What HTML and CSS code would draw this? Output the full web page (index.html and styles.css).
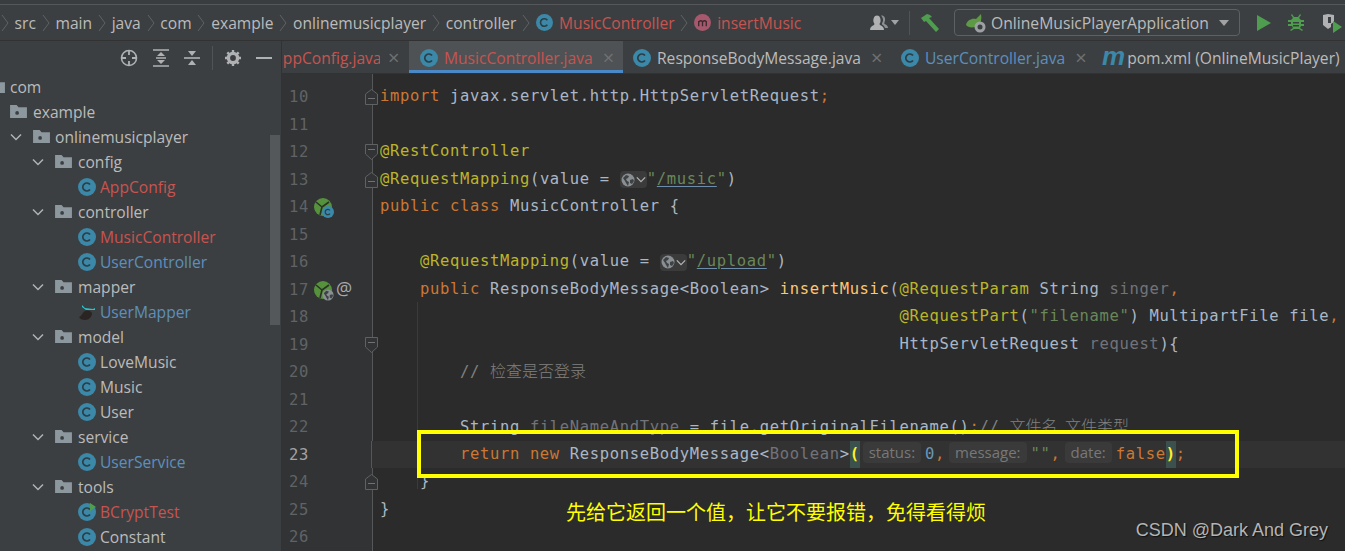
FILE: index.html
```html
<!DOCTYPE html>
<html lang="en">
<head>
<meta charset="utf-8">
<title>OnlineMusicPlayer</title>
<link rel="stylesheet" href="styles.css">
</head>
<body>
<svg class="defs" width="0" height="0" aria-hidden="true">
  <symbol id="cls" viewBox="0 0 18 18"><circle cx="9" cy="9" r="9" fill="#3b88a8"/><path d="M12 6.600A4 4 0 1 0 12 11.400" fill="none" stroke="#2c3e46" stroke-width="1.700"/></symbol>
  <symbol id="mth" viewBox="0 0 18 18"><circle cx="9" cy="9" r="9" fill="#a8586c"/><path d="M5 13V7.500M5 8.500Q7 6 9 8V13M9 8.500Q11 6 13 8V13" fill="none" stroke="#3a2a30" stroke-width="1.400"/></symbol>
  <symbol id="fld" viewBox="0 0 18 16"><path d="M0 1h7l2 2.500h9V15H0z" fill="#8c979e"/><circle cx="7.500" cy="9.500" r="2" fill="#3c3f41"/></symbol>
  <symbol id="chv" viewBox="0 0 12 8"><path d="M1 1.500l5 5 5-5" fill="none" stroke="#b0b3b5" stroke-width="1.500"/></symbol>
  <symbol id="sep" viewBox="0 0 8 18"><path d="M1 1l6 8-6 8" fill="none" stroke="#606364" stroke-width="1"/></symbol>
  <symbol id="bean" viewBox="0 0 18 18"><circle cx="9" cy="9" r="9" fill="#56923b"/><path d="M2 4l6 5M8 9l-2 8M8 9l7-5" fill="none" stroke="#2b3328" stroke-width="1.600"/></symbol>
  <symbol id="globe" viewBox="0 0 14 14"><circle cx="7" cy="7" r="6.500" fill="#8a8f93"/><path d="M2 5l3-3 3 1-1 2-2 1 1 2 2 1-1 4-2-3-1-2zM9 7l3-1 1 2-2 3-2-1z" fill="#3f4244"/></symbol>
  <symbol id="foldup" viewBox="0 0 13 16"><path d="M6.500.5L12.500 5V15.500H.5V5z" fill="#313335" stroke="#5f6163"/><path d="M3 9.500h7" stroke="#6f7173"/></symbol>
  <symbol id="folddown" viewBox="0 0 13 16"><path d="M.5.5H12.500V10L6.500 15.500.5 10z" fill="#313335" stroke="#5f6163"/><path d="M3 5.500h7" stroke="#6f7173"/></symbol>
</svg>

<div class="app">
  <header class="top">
    <nav class="crumbs">
      <svg class="sp"><use href="#sep"/></svg><span>src</span>
      <svg class="sp"><use href="#sep"/></svg><span>main</span>
      <svg class="sp"><use href="#sep"/></svg><span>java</span>
      <svg class="sp"><use href="#sep"/></svg><span>com</span>
      <svg class="sp"><use href="#sep"/></svg><span>example</span>
      <svg class="sp"><use href="#sep"/></svg><span>onlinemusicplayer</span>
      <svg class="sp"><use href="#sep"/></svg><span>controller</span>
      <svg class="sp"><use href="#sep"/></svg><svg class="ic16"><use href="#cls"/></svg><span class="red">MusicController</span>
      <svg class="sp"><use href="#sep"/></svg><svg class="ic16"><use href="#mth"/></svg><span class="red">insertMusic</span>
    </nav>
    <div class="actions">
      <svg class="person" width="20" height="18" viewBox="0 0 20 18"><path d="M1 16c0-3 2-4 4-5 1-1 0-2-.500-3C4 5 5 1.500 8 1.500S12 5 11.500 8c-.500 1-1.500 2-.500 3 2 1 4 2 4 5z" fill="#afb1b3"/><path d="M12 1.500c3-.5 4.500 2 4 5-.3 1.500-1 2.500-.5 3.500 1.500.8 3.500 1.500 3.500 4h-3c-.5-2-2-3-3-3.500-.5-1 .5-2 1-3.500.3-2-.5-4-2-5.500z" fill="#8d8f91"/></svg>
      <span class="caret small"></span>
      <i class="vsep"></i>
      <svg class="hammer" width="21" height="20" viewBox="0 0 21 20"><path d="M1 5l6-4 3 1 2 2-3 1 10 11-3 3L6 8 4 9z" fill="#4f9e4f"/></svg>
      <div class="combo">
        <svg width="20" height="20" viewBox="0 0 20 20"><path d="M0 12C1 7 6 5 10 6l5-5c1 5 0 9-3 12-4 2-10 2-12-1z" fill="#5e9a45"/><circle cx="14" cy="14" r="5.500" fill="#9ea1a3"/><circle cx="14" cy="14" r="2.500" fill="#3c3f41"/></svg>
        <span>OnlineMusicPlayerApplication</span>
        <span class="caret"></span>
      </div>
      <svg class="run" width="14" height="16" viewBox="0 0 14 16"><path d="M0 0l14 8-14 8z" fill="#4f9e4f"/></svg>
      <svg class="debug" width="18" height="18" viewBox="0 0 18 18"><path d="M5 0l2 3h4l2-3 1 1-2 3 2 2h3v2h-3v2h3v2h-3l-1 2 3 2-1 1-3-2H7l-3 2-1-1 3-2-1-2H1v-2h3V8H1V6h3l2-2-2-3z" fill="#4f9e4f"/><path d="M6 8h6v1.500H6zM6 11h6v1.500H6z" fill="#3c3f41"/></svg>
      <svg class="cover" width="20" height="20" viewBox="0 0 20 20"><path d="M1 2l5-1 6 1v7l-3 2v3l-3 2-5-4z" fill="#afb1b3"/><path d="M6 4h3v6H6z" fill="#3c3f41"/><path d="M11 8l9 6-9 6z" fill="#4f9e4f"/></svg>
    </div>
  </header>

  <main class="body">
    <aside class="side">
      <div class="tools">
        <svg width="18" height="18" viewBox="0 0 18 18"><circle cx="9" cy="9" r="7.500" fill="none" stroke="#afb1b3" stroke-width="1.600"/><path d="M9 1v5M9 12v5M1 9h5M12 9h5" stroke="#afb1b3" stroke-width="1.800"/></svg>
        <svg width="16" height="18" viewBox="0 0 16 18"><path d="M0 1h16M0 17h16M3 9h10" stroke="#afb1b3" stroke-width="1.600"/><path d="M8 3l4 4H4zM8 15l-4-4h8z" fill="#afb1b3"/></svg>
        <svg width="16" height="18" viewBox="0 0 16 18"><path d="M0 9h16" stroke="#afb1b3" stroke-width="1.600"/><path d="M8 7L4 2h8zM8 11l4 5H4z" fill="#afb1b3"/></svg>
        <i class="vsep tall"></i>
        <svg width="16" height="16" viewBox="0 0 16 16"><circle cx="8" cy="8" r="4.600" fill="none" stroke="#afb1b3" stroke-width="3.400"/><path d="M8 0v3M8 13v3M0 8h3M13 8h3M2.300 2.300l2.100 2.100M11.600 11.600l2.100 2.100M13.700 2.300l-2.100 2.100M4.400 11.600l-2.100 2.100" stroke="#afb1b3" stroke-width="2.400"/></svg>
        <svg width="16" height="4" viewBox="0 0 16 4"><path d="M0 2h16" stroke="#afb1b3" stroke-width="2"/></svg>
      </div>
      <div class="tree">
        <div class="row d0"><svg class="fld"><use href="#fld"/></svg><span>com</span></div>
        <div class="row d1"><svg class="fld"><use href="#fld"/></svg><span>example</span></div>
        <div class="row d2"><svg class="chv"><use href="#chv"/></svg><svg class="fld"><use href="#fld"/></svg><span>onlinemusicplayer</span></div>
        <div class="row d3"><svg class="chv"><use href="#chv"/></svg><svg class="fld"><use href="#fld"/></svg><span>config</span></div>
        <div class="row leaf"><svg class="cl"><use href="#cls"/></svg><span class="red">AppConfig</span></div>
        <div class="row d3"><svg class="chv"><use href="#chv"/></svg><svg class="fld"><use href="#fld"/></svg><span>controller</span></div>
        <div class="row leaf"><svg class="cl"><use href="#cls"/></svg><span class="red">MusicController</span></div>
        <div class="row leaf"><svg class="cl"><use href="#cls"/></svg><span class="blue">UserController</span></div>
        <div class="row d3"><svg class="chv"><use href="#chv"/></svg><svg class="fld"><use href="#fld"/></svg><span>mapper</span></div>
        <div class="row leaf"><svg class="cl" viewBox="0 0 18 18"><path d="M1 14C3 14 4 10 7 8c3-1 6 0 7 2 0 4-3 7-7 7-3 0-5-1-6-3z" fill="#2a2523"/><path d="M4 2l3 3 8 1 2-1v2l-9 0-4-3z" fill="#2ac4cc"/></svg><span class="blue">UserMapper</span></div>
        <div class="row d3"><svg class="chv"><use href="#chv"/></svg><svg class="fld"><use href="#fld"/></svg><span>model</span></div>
        <div class="row leaf"><svg class="cl"><use href="#cls"/></svg><span>LoveMusic</span></div>
        <div class="row leaf"><svg class="cl"><use href="#cls"/></svg><span>Music</span></div>
        <div class="row leaf"><svg class="cl"><use href="#cls"/></svg><span>User</span></div>
        <div class="row d3"><svg class="chv"><use href="#chv"/></svg><svg class="fld"><use href="#fld"/></svg><span>service</span></div>
        <div class="row leaf"><svg class="cl"><use href="#cls"/></svg><span class="blue">UserService</span></div>
        <div class="row d3"><svg class="chv"><use href="#chv"/></svg><svg class="fld"><use href="#fld"/></svg><span>tools</span></div>
        <div class="row leaf"><svg class="cl" viewBox="0 0 18 18"><use href="#cls" width="18" height="18"/><path d="M12 0l6 4-6 4z" fill="#4f9e4f"/></svg><span class="red">BCryptTest</span></div>
        <div class="row leaf"><svg class="cl"><use href="#cls"/></svg><span>Constant</span></div>
      </div>
      <div class="scroll"></div>
    </aside>

    <section class="main">
      <div class="tabs">
        <div class="tab first"><span class="red">AppConfig.java</span><b>×</b></div>
        <div class="tab active"><svg class="cl"><use href="#cls"/></svg><span class="red">MusicController.java</span><b>×</b></div>
        <div class="tab third"><svg class="cl"><use href="#cls"/></svg><span>ResponseBodyMessage.java</span><b>×</b></div>
        <div class="tab fourth"><svg class="cl"><use href="#cls"/></svg><span class="blue">UserController.java</span><b>×</b></div>
        <div class="tab fifth"><em>m</em><span>pom.xml (OnlineMusicPlayer)</span></div>
      </div>
      <div class="editor">
        <div class="line"><div class="gut"><span class="no">10</span><svg class="fold"><use href="#foldup"/></svg></div><pre><span class="k">import</span> javax.servlet.http.HttpServletRequest<span class="k">;</span></pre></div>
        <div class="line"><div class="gut"><span class="no">11</span></div><pre> </pre></div>
        <div class="line"><div class="gut"><span class="no">12</span><svg class="fold"><use href="#folddown"/></svg></div><pre><span class="a">@RestController</span></pre></div>
        <div class="line"><div class="gut"><span class="no">13</span><svg class="fold"><use href="#foldup"/></svg></div><pre><span class="a">@RequestMapping</span>(value = <span class="chip"><svg width="14" height="14"><use href="#globe"/></svg><svg class="cv" width="10" height="7"><use href="#chv"/></svg></span><span class="s">"<u>/music</u>"</span>)</pre></div>
        <div class="line"><div class="gut"><span class="no">14</span><svg class="gi"><use href="#bean"/></svg><svg class="gi2" width="12" height="12"><use href="#cls"/></svg></div><pre><span class="k">public class</span> MusicController {</pre></div>
        <div class="line"><div class="gut"><span class="no">15</span></div><pre> </pre></div>
        <div class="line"><div class="gut"><span class="no">16</span></div><pre>    <span class="a">@RequestMapping</span>(value = <span class="chip"><svg width="14" height="14"><use href="#globe"/></svg><svg class="cv" width="10" height="7"><use href="#chv"/></svg></span><span class="s">"<u>/upload</u>"</span>)</pre></div>
        <div class="line"><div class="gut"><span class="no">17</span><svg class="gi"><use href="#bean"/></svg><svg class="gi2" width="12" height="12"><use href="#globe"/></svg><span class="at">@</span></div><pre>    <span class="k">public</span> ResponseBodyMessage&lt;Boolean&gt; <span class="m">insertMusic</span>(<span class="a">@RequestParam</span> String <span class="g">singer</span><span class="k">,</span></pre></div>
        <div class="line"><div class="gut"><span class="no">18</span></div><pre>                                                    <span class="a">@RequestPart</span>(<span class="s">"filename"</span>) MultipartFile file<span class="k">,</span></pre></div>
        <div class="line"><div class="gut"><span class="no">19</span><svg class="fold"><use href="#folddown"/></svg></div><pre>                                                    HttpServletRequest <span class="g">request</span>){</pre></div>
        <div class="line"><div class="gut"><span class="no">20</span></div><pre>        <span class="c">// <span class="cjk">检查是否登录</span></span></pre></div>
        <div class="line"><div class="gut"><span class="no">21</span></div><pre> </pre></div>
        <div class="line"><div class="gut"><span class="no">22</span></div><pre>        String <span class="g">fileNameAndType</span> = file.getOriginalFilename()<span class="k">;</span><span class="c">// <span class="cjk">文件名 文件类型</span></span></pre></div>
        <div class="line cur"><div class="gut"><span class="no">23</span></div><pre>        <span class="k">return new</span> ResponseBodyMessage&lt;<span class="g">Boolean</span>&gt;<span class="br">(</span><span class="hint first-h">status:</span><span class="n">0</span><span class="k">,</span><span class="hint">message:</span><span class="s">""</span><span class="k">,</span><span class="hint">date:</span><span class="k">false</span><span class="br">)</span><span class="k">;</span></pre></div>
        <div class="line"><div class="gut"><span class="no">24</span><svg class="fold"><use href="#foldup"/></svg></div><pre>    }</pre></div>
        <div class="line"><div class="gut"><span class="no">25</span></div><pre>}</pre></div>
        <div class="line"><div class="gut"><span class="no">26</span></div><pre> </pre></div>
        <i class="guide"></i>
        <div class="box"></div>
        <p class="note">先给它返回一个值&#65292;让它不要报错&#65292;免得看得烦</p>
      </div>
    </section>
  </main>
  <div class="mark">CSDN @Dark And Grey</div>
</div>
</body>
</html>
```
FILE: styles.css
```css
* { box-sizing: border-box; }
html, body { margin: 0; padding: 0; }
body { width: 1345px; height: 551px; overflow: hidden; background: #2b2b2b; font-family: "Open Sans", "Noto Sans", sans-serif; font-size: 15.6px; color: #bbbbbb; }
.defs { position: absolute; }
.app { position: relative; width: 1345px; height: 551px; display: flex; flex-direction: column; overflow: hidden; }
.red { color: #c75450; }
.blue { color: #5c8fbd; }

.top { flex: none; display: flex; justify-content: space-between; align-items: center; background: #3c3f41; border-top: 1px solid #55585a; border-bottom: 1px solid #323232; margin-top: 4px; box-shadow: 0 -4px 0 #3a3d3f; height: 37px; }
.crumbs { display: flex; align-items: center; margin-left: -5px; }
.crumbs .sp { width: 8px; height: 18px; margin: 0 5.8px; flex: none; }
.ic16 { width: 17px; height: 17px; margin-right: 6px; flex: none; }
.actions { display: flex; align-items: center; padding-right: 3px; }
.person { margin-right: 2px; }
.caret { width: 0; height: 0; border-left: 5.5px solid transparent; border-right: 5.5px solid transparent; border-top: 6px solid #a0a2a4; }
.caret.small { border-left-width: 4.5px; border-right-width: 4.5px; border-top-width: 5px; }
.vsep { display: block; width: 1px; height: 24px; background: #515456; margin: 0 10px; }
.vsep.tall { margin: 0 -3px; }
.hammer { margin-right: 13px; }
.combo { width: 286px; height: 27px; border: 1px solid #5e6163; border-radius: 4px; display: flex; align-items: center; padding-left: 11px; gap: 5px; margin-right: 17px; font-size: 15.7px; }
.combo .caret { margin-left: 5px; }
.run { margin-right: 16px; }
.debug { margin-right: 17px; }

.body { flex: 1; min-height: 0; display: flex; }
.side { position: relative; width: 282px; flex: none; background: #3c3f41; border-right: 1px solid #323232; }
.tools { height: 33px; display: flex; align-items: center; justify-content: flex-end; gap: 15px; padding-right: 9px; }
.row { height: 25px; display: flex; align-items: center; white-space: nowrap; }
.row .fld { width: 17px; height: 15px; margin-right: 6px; flex: none; }
.row .chv { width: 12px; height: 8px; margin-right: 11px; flex: none; }
.cl { width: 18px; height: 18px; margin-right: 4px; flex: none; }
.d0 .fld { margin-left: -12px; margin-right: 5px; }
.d1 { padding-left: 10px; }
.d2 { padding-left: 10px; }
.d2 .fld { margin-right: 5px; }
.d3 { padding-left: 32px; }
.leaf { padding-left: 78px; }
.scroll { position: absolute; left: 270px; top: 94px; width: 10px; height: 190px; background: #55585a; }

.main { flex: 1; min-width: 0; display: flex; flex-direction: column; }
.tabs { height: 33px; flex: none; background: #3c3f41; display: flex; border-bottom: 1px solid #323232; white-space: nowrap; overflow: hidden; }
.tab { display: flex; align-items: center; padding: 2px 9px 0 10px; flex: none; }
.tab b { font-weight: 400; font-size: 20px; color: #6e7173; margin-left: 10px; line-height: 1; }
.tab.first { width: 127px; padding: 2px 0 0 2px; }
.tab.first span { display: block; width: 96px; flex: none; overflow: hidden; text-indent: -11px; }
.tab.first b { margin-left: 8px; }
.tab.active { width: 214px; background: #4e5254; border-bottom: 3px solid #4a88c7; padding-top: 5px; padding-left: 11px; }
.tab.third { width: 268px; }
.tab.fourth { width: 201px; }
.tab .cl { margin-right: 6px; }
.tab em { font-family: "Liberation Sans", sans-serif; font-weight: 700; font-size: 26px; color: #3b88a8; margin-right: 2px; line-height: 1; position: relative; top: -2px; }

.editor { position: relative; flex: 1; min-height: 0; padding-top: 9.3px; background: #2b2b2b; font-family: "DejaVu Sans Mono", monospace; font-size: 15.5px; color: #a9b7c6; overflow: hidden; }
.editor::before { content: ""; position: absolute; left: 0; top: 0; bottom: 0; width: 90px; background: #313335; border-right: 1px solid #555758; }
.line { position: relative; height: 27.5px; display: flex; align-items: center; }
.line.cur { background: #323232; }
.gut { position: relative; width: 90px; height: 100%; flex: none; display: flex; align-items: center; padding-left: 7px; }
.no { color: #606366; font-size: 15.5px; letter-spacing: .6px; }
.cur .no { color: #a4a3a3; }
.cur .gut { background: #313335; border-right: 1px solid #555758; }
pre { margin: 0; padding-left: 8px; font: inherit; letter-spacing: .66px; white-space: pre; line-height: 27.5px; }
.k { color: #cc7832; }
.a { color: #bbb529; }
.m { color: #ffc66d; }
.s { color: #6a8759; }
.s u { text-decoration-color: #6e8dab; text-underline-offset: 2px; }
.n { color: #6897bb; }
.c { color: #808080; }
.g { color: #72737a; }
.cjk { font-family: "Noto Sans CJK SC", sans-serif; font-weight: 300; letter-spacing: 0; font-size: 16px; word-spacing: 4px; }
.chip { display: inline-flex; align-items: center; width: 27px; height: 17px; background: #3b3b3b; border-radius: 4px; vertical-align: -3px; padding-left: 1px; }
.chip .cv { margin-left: 1px; }
.hint { display: inline-block; font-family: "Open Sans", sans-serif; font-size: 15px; letter-spacing: 0; color: #787878; background: #3a3a3a; border-radius: 4px; line-height: 21px; padding: 0 6px; margin: 0 4px; vertical-align: 1px; }
.first-h { margin-left: 3px; }
.br { color: #ffef28; font-weight: 700; background: #3b514d; display: inline-block; line-height: 27.5px; }
.gi { position: absolute; left: 32px; top: 5px; width: 18px; height: 18px; }
.gi2 { position: absolute; left: 40px; top: 13px; }
.at { position: absolute; left: 54px; top: -1px; line-height: 27.5px; color: #a8aaac; font-family: "Open Sans", sans-serif; font-size: 18px; }
.fold { position: absolute; left: 83px; top: 6px; width: 13px; height: 16px; z-index: 1; }
.guide { position: absolute; left: 135px; top: 228px; bottom: 62px; width: 1px; background: #3b3b3b; }
.box { position: absolute; left: 135px; top: 356px; width: 822px; height: 48px; border: 4px solid #ffff00; }
.note { position: absolute; left: 284px; top: 424px; margin: 0; font-family: "Noto Sans CJK SC", sans-serif; font-size: 20px; line-height: 28px; color: #ffff00; white-space: nowrap; }
.mark { position: absolute; right: 17px; top: 519px; font-family: "Liberation Sans", sans-serif; font-size: 18px; line-height: 22px; color: #b4b4b4; text-shadow: 1px 1px 1px #111; }
```
